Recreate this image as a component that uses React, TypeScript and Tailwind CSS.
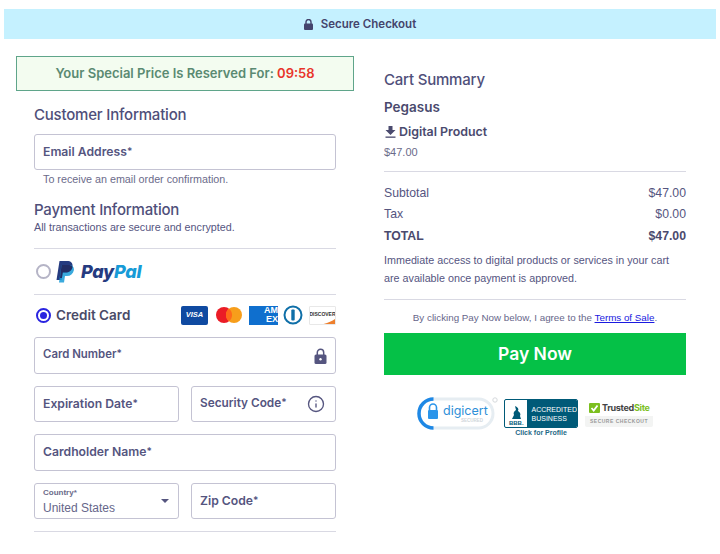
import React from 'react';
import { Info } from 'lucide-react';

const heading = "font-['Inter',sans-serif]";
const body = "font-['Liberation_Sans',Arial,sans-serif]";

const Field = ({
  label,
  className = '',
  labelClass = 'text-[12.2px]',
  children,
}: {
  label: string;
  className?: string;
  labelClass?: string;
  children?: React.ReactNode;
}) => (
  <div className={`flex h-9 items-center justify-between rounded-[3px] border border-[#c4c3d3] bg-white px-2 ${className}`}>
    <span className={`${heading} font-semibold text-[#55557f] ${labelClass}`}>
      {label}
      <span className="relative -top-[1px] text-[10px]">*</span>
    </span>
    {children}
  </div>
);

const PayPalLogo = () => (
  <div className="flex items-center gap-[7px]">
    <svg width="18" height="22" viewBox="0 0 18 22">
      <path d="M3.500 0H11c4 0 6 2 5.500 5.500C16 9.500 13 11.500 9.500 11.500H6.800L5.600 19H0.500Z" fill="#253b80" />
      <path d="M5.500 4H12.500C16.500 4 18.500 6 17.800 9.500C17 13 14.500 15 11 15H9L8 21.500H3Z" fill="#179bd7" opacity="0.85" />
      <path d="M5.500 4H12C14 4 15.800 4.500 16.500 6C16 9.500 13 11.500 9.500 11.500H6.800L5.900 17H4Z" fill="#222d65" />
    </svg>
    <span className={`${heading} text-[18px] font-extrabold italic leading-none tracking-[-0.3px]`}>
      <span className="text-[#253b80]">Pay</span>
      <span className="text-[#179bd7]">Pal</span>
    </span>
  </div>
);

const CardLogos = () => (
  <div className="flex items-center">
    <div className={`${body} flex h-[19px] w-[27px] items-center justify-center rounded-[2px] bg-[#0f4aa1] text-[7.500px] font-bold italic text-white`}>VISA</div>
    <svg width="26" height="16" viewBox="0 0 26 16" className="ml-[8px]">
      <circle cx="8" cy="8" r="8" fill="#eb1c26" />
      <circle cx="18" cy="8" r="8" fill="#f79e1b" />
      <path d="M13 1.700a8 8 0 0 1 0 12.600a8 8 0 0 1 0-12.600Z" fill="#ff6a1a" />
    </svg>
    <div className={`${body} ml-[7px] flex h-[19px] w-[29px] flex-col items-end justify-center overflow-hidden bg-[#0f6fce] text-[9px] font-bold leading-[9px] text-white`}>
      <span>AM</span>
      <span>EX</span>
    </div>
    <svg width="20" height="20" viewBox="0 0 20 20" className="ml-[5px]">
      <circle cx="10" cy="10" r="8.500" fill="none" stroke="#0f6fa8" strokeWidth="2" />
      <rect x="8.300" y="4.500" width="3.400" height="11" rx="1" fill="#0f6fa8" />
    </svg>
    <div className="relative ml-[6px] flex h-[19px] w-[27px] items-start justify-center overflow-hidden rounded-[1px] border border-[#e8e8e8] bg-white">
      <span className={`${body} mt-[4px] text-[5px] font-bold leading-[6px] text-[#333]`}>DISCOVER</span>
      <svg width="27" height="19" viewBox="0 0 27 19" className="absolute left-0 top-0">
        <path d="M10 18C18 16 23 13.500 27 10.500V19H10Z" fill="#ee7f2d" />
      </svg>
    </div>
  </div>
);

const DigiCert = () => (
  <svg width="82" height="34" viewBox="0 0 82 34">
    <rect x="2" y="2" width="74" height="29" rx="14.500" fill="none" stroke="#e6edf2" strokeWidth="3" />
    <path d="M16.500 2A14.500 14.500 0 0 0 16.500 31" fill="none" stroke="#1e88e5" strokeWidth="3.500" />
    <path d="M12.500 13v-2.500a3.500 3.500 0 0 1 7 0V13" fill="none" stroke="#2b95ea" strokeWidth="1.600" />
    <rect x="11" y="13" width="10" height="9" rx="1" fill="#2b95ea" />
    <text x="26" y="18" fontSize="12.500" fontFamily="Inter, sans-serif" fill="#2e8fd8">digicert</text>
    <text x="44" y="25" fontSize="4.500" fontFamily="Liberation Sans, sans-serif" fontWeight="700" fill="#cfd6da">SECURED</text>
    <circle cx="78" cy="3" r="2.200" fill="none" stroke="#d5d9dc" strokeWidth="1" />
  </svg>
);

const BbbBadge = () => (
  <div className="flex flex-col items-center">
    <div className="flex h-[29px] w-[74px] overflow-hidden rounded-[2px] border border-[#005a78] bg-white">
      <div className="flex w-[25px] flex-col items-center justify-end">
        <svg width="11" height="13" viewBox="0 0 11 13">
          <path d="M4 0C7 1 8 3 7 5C9 6 10 8 9 10L10 13H1L3 9C2 7 3 5 5 4Z" fill="#005a78" />
        </svg>
        <span className={`${body} text-[6px] font-bold leading-[8px] text-[#005a78]`}>BBB.</span>
      </div>
      <div className={`${body} flex flex-1 flex-col justify-center bg-[#005a78] pl-[4px] text-[7px] leading-[9px] text-white`}>
        <span>ACCREDITED</span>
        <span>BUSINESS</span>
      </div>
    </div>
    <span className={`${body} mt-[1px] text-[7px] font-bold leading-[8px] text-[#1f6a87]`}>Click for Profile</span>
  </div>
);

const TrustedSite = () => (
  <div className="flex h-[28px] w-[68px] flex-col items-center rounded-[2px] bg-[#f3f4f3]">
    <div className="flex h-[17px] items-center gap-[2px] self-stretch bg-white pl-[4px]">
      <svg width="11" height="10" viewBox="0 0 11 10">
        <rect width="11" height="10" rx="1" fill="#7cbf1f" />
        <path d="M2.500 5L4.700 7.500L8.500 2.500" fill="none" stroke="#fff" strokeWidth="1.800" />
      </svg>
      <span className={`${heading} text-[9px] font-bold leading-none tracking-[-0.3px] text-[#444]`}>
        Trusted<span className="text-[#7cbf1f]">Site</span>
      </span>
    </div>
    <span className={`${body} mt-[1px] text-[5px] font-bold leading-[9px] tracking-[0.5px] text-[#9a9a9a]`}>SECURE CHECKOUT</span>
  </div>
);

export default function App() {
  return (
    <div className={`${body} h-[554px] w-[720px] overflow-hidden bg-white pt-[9px] text-[#55557f]`}>
      <div className="mx-1 flex h-[30px] items-center justify-center gap-[8px] bg-[#c5f1ff] pt-[1px]">
        <svg width="9" height="11" viewBox="0 0 9 11">
          <path d="M2 5V3a2.500 2.500 0 0 1 5 0V5" fill="none" stroke="#44446c" strokeWidth="1.400" />
          <rect x="0" y="4.500" width="9" height="6.500" rx="1" fill="#44446c" />
        </svg>
        <span className={`${heading} text-[11.500px] font-semibold text-[#44446c]`}>Secure Checkout</span>
      </div>

      <div className="mt-[17px] flex pl-4">
        <div className="w-[338px]">
          <div className={`${heading} flex h-[35px] items-center justify-center border border-[#5fa58a] bg-[#f3fcf0] text-[13px] font-semibold text-[#5a8a72]`}>
            <span>Your Special Price Is Reserved For:&nbsp;</span>
            <span className="text-[#e8352a]">09:58</span>
          </div>

          <div className="px-[18px]">
            <h2 className={`${heading} mt-[14px] text-[15px] font-medium leading-5 tracking-[-0.2px] text-[#4f4f7a]`}>Customer Information</h2>
            <Field label="Email Address" className="mt-[9px]" />
            <p className="mt-[3px] pl-[9px] text-[10.750px] leading-[13px] text-[#6b6b8a]">To receive an email order confirmation.</p>

            <h2 className={`${heading} mt-[14px] text-[15px] font-medium leading-5 tracking-[-0.2px] text-[#4f4f7a]`}>Payment Information</h2>
            <p className="text-[10.750px] leading-[14px] text-[#55557f]">All transactions are secure and encrypted.</p>

            <div className="mt-[14px] flex h-[47px] items-center gap-[5px] border-y border-[#d9d9e3] pl-[2px]">
              <span className="h-[15px] w-[15px] rounded-full border-2 border-[#b5b4c6] bg-white" />
              <PayPalLogo />
            </div>

            <div className="flex h-[42px] items-center justify-between pb-[2px] pl-[2px]">
              <div className="flex items-center gap-[5px]">
                <span className="flex h-[15px] w-[15px] items-center justify-center rounded-full border-2 border-[#2a24e0]">
                  <span className="h-[7px] w-[7px] rounded-full bg-[#2a24e0]" />
                </span>
                <span className={`${heading} text-[13.500px] font-semibold text-[#4a4a68]`}>Credit Card</span>
              </div>
              <CardLogos />
            </div>

            <Field label="Card Number" className="h-[37px]" labelClass="pb-[2px] text-[11.400px]">
              <svg width="13" height="16" viewBox="0 0 13 16">
                <path d="M3.300 7V4.500a3.200 3.200 0 0 1 6.400 0V7" fill="none" stroke="#55557f" strokeWidth="1.500" />
                <rect x="0.500" y="6.500" width="12" height="9.500" rx="1.500" fill="#55557f" />
                <circle cx="6.500" cy="11.200" r="1.200" fill="#fff" />
              </svg>
            </Field>

            <div className="mt-3 grid grid-cols-2 gap-3">
              <Field label="Expiration Date" />
              <Field label="Security Code" labelClass="text-[11.800px]">
                <Info size={18} strokeWidth={1.800} className="mr-[2px] text-[#55557f]" />
              </Field>
            </div>

            <Field label="Cardholder Name" className="mt-3 h-[37px]" />

            <div className="mt-3 grid grid-cols-2 gap-3">
              <div className="flex h-9 items-center justify-between rounded-[3px] border border-[#c4c3d3] bg-white pl-2 pr-[9px]">
                <div className="flex flex-col">
                  <span className="text-[8px] font-bold leading-[10px] text-[#6b6b8a]">Country*</span>
                  <span className="mt-[3px] text-[12px] leading-[14px] text-[#66668a]">United States</span>
                </div>
                <span className="h-0 w-0 border-x-[4px] border-t-[4px] border-x-transparent border-t-[#55557f]" />
              </div>
              <Field label="Zip Code" />
            </div>

            <div className="mt-3 border-t border-[#d9d9e3]" />
          </div>
        </div>

        <div className="ml-[30px] w-[302px]">
          <h2 className={`${heading} mt-[14px] text-[15px] font-medium leading-5 tracking-[-0.2px] text-[#4f4f7a]`}>Cart Summary</h2>
          <p className={`${heading} mt-[7px] text-[13.500px] font-semibold leading-5 text-[#4a4a6e]`}>Pegasus</p>
          <p className={`${heading} mt-[5px] flex items-center gap-[3px] text-[12.400px] font-semibold leading-5 text-[#4a4a6e]`}>
            <svg width="11" height="12" viewBox="0 0 11 12" className="ml-[1px]">
              <path d="M3.500 0H7.500V4H10.500L5.500 9L0.500 4H3.500Z" fill="#4a4a6e" />
              <rect x="0.500" y="10.500" width="10" height="1.300" fill="#4a4a6e" />
            </svg>
            Digital Product
          </p>
          <p className="mt-[2px] text-[11px] leading-[16px] text-[#6b6b8a]">$47.00</p>

          <div className="mt-[11px] border-t border-[#d9d9e3] pt-[11px] text-[12.250px]">
            <div className="flex justify-between leading-[21px]"><span>Subtotal</span><span>$47.00</span></div>
            <div className="flex justify-between leading-[21px]"><span>Tax</span><span>$0.00</span></div>
            <div className="flex justify-between font-bold leading-[22px] text-[#4a4a6e]"><span>TOTAL</span><span>$47.00</span></div>
          </div>

          <p className="mt-[4px] text-[10.750px] leading-[18px] text-[#55557f]">
            Immediate access to digital products or services in your cart are available once payment is approved.
          </p>

          <div className="mt-[12px] border-t border-[#d9d9e3] pt-[11px] text-center text-[9.800px] leading-[13px] text-[#66668a]">
            By clicking Pay Now below, I agree to the <span className="text-[#1a1ae0] underline">Terms of Sale</span>.
          </div>

          <button className={`${heading} mt-[9px] flex h-[42px] w-full items-center justify-center bg-[#05c147] text-[17.500px] font-semibold text-white`}>
            Pay Now
          </button>

          <div className="mt-[22px] flex items-start pl-[33px]">
            <DigiCert />
            <div className="ml-[5px] mt-[2px]"><BbbBadge /></div>
            <div className="ml-[7px] mt-[2px]"><TrustedSite /></div>
          </div>
        </div>
      </div>
    </div>
  );
}
